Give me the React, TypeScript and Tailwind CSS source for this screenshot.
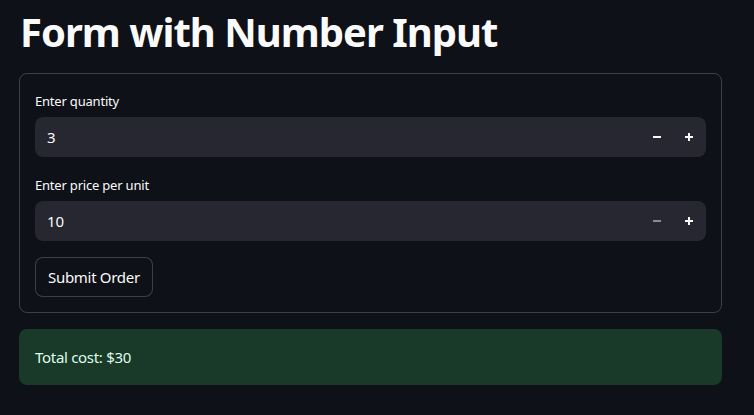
import React from "react";

function Minus({ disabled }: { disabled?: boolean }) {
  return (
    <svg width="10" height="10" viewBox="0 0 10 10">
      <rect x="1" y="4" width="8" height="2" fill={disabled ? "#8a8b93" : "#fafafa"} />
    </svg>
  );
}
function Plus() {
  return (
    <svg width="10" height="10" viewBox="0 0 10 10">
      <rect x="1" y="4" width="8" height="2" fill="#fafafa" />
      <rect x="4" y="1" width="2" height="8" fill="#fafafa" />
    </svg>
  );
}

function NumberField({ label, value, minusDisabled }: { label: string; value: string; minusDisabled?: boolean }) {
  return (
    <div className="flex flex-col">
      <div className="text-[13px] leading-[20px] tracking-[-0.2px] text-[#fafafa] mb-[6px]">{label}</div>
      <div className="h-[40px] rounded-[8px] bg-[#262730] flex items-center pl-[12px] pr-[1px]">
        <span className="flex-1 text-[15px] text-[#fafafa]">{value}</span>
        <div className="flex items-center">
          <div className="w-[32px] h-[40px] flex items-center justify-center"><Minus disabled={minusDisabled} /></div>
          <div className="w-[32px] h-[40px] flex items-center justify-center"><Plus /></div>
        </div>
      </div>
    </div>
  );
}

export default function App() {
  return (
    <div className="min-h-[415px] w-full bg-[#0e1117] text-[#fafafa]" style={{ fontFamily: '"Noto Sans", "Open Sans", sans-serif' }}>
      <div className="pl-[19px] pr-[32px] pt-[4px]">
        <h1 className="text-[40px] font-bold leading-[56px] tracking-[-1px] mb-[13px] ml-[1px]">Form with Number Input</h1>
        <div className="border border-[rgba(250,250,250,0.2)] rounded-[8px] px-[15px] pt-[17px] pb-[15px] flex flex-col gap-[8px]">
          <NumberField label="Enter quantity" value="3" />
          <div className="h-[2px]" />
          <NumberField label="Enter price per unit" value="10" minusDisabled />
          <div className="mt-[8px]">
            <button className="h-[40px] px-[12px] rounded-[8px] border border-[rgba(250,250,250,0.2)] text-[15px] tracking-[-0.3px] text-[#fafafa] bg-[#0e1117]">Submit Order</button>
          </div>
        </div>
        <div className="mt-[16px] h-[56px] rounded-[8px] bg-[#1a3a29] flex items-center px-[16px] text-[15px] tracking-[-0.3px] text-[#dffde9]">
          Total cost: $30
        </div>
      </div>
    </div>
  );
}
